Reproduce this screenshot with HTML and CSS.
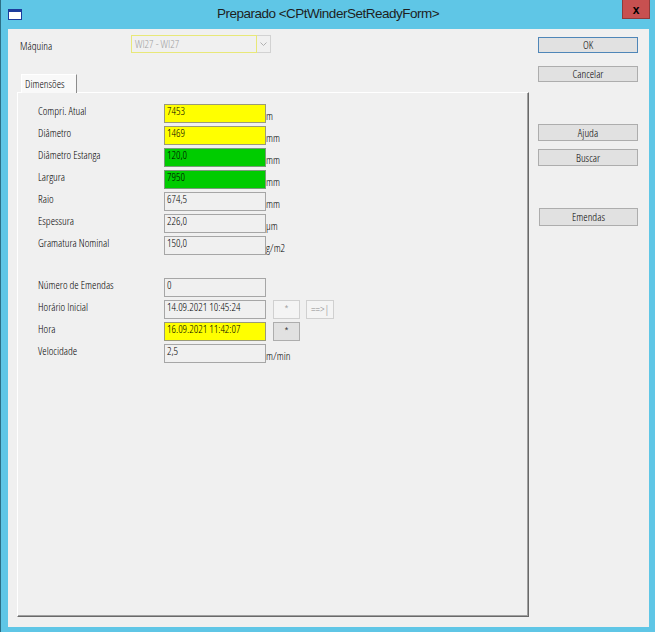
FILE: index.html
```html
<!DOCTYPE html>
<html lang="pt">
<head>
<meta charset="utf-8">
<title>Preparado</title>
<link rel="stylesheet" href="styles.css">
</head>
<body>
<div class="window">
  <div class="titlebar">
    <span class="app-icon"></span>
    <div class="title">Preparado &lt;CPtWinderSetReadyForm&gt;</div>
    <div class="close">x</div>
  </div>
  <div class="client">
    <div class="main">
      <div class="machine-row">
        <span class="machine-lbl">Máquina</span>
        <div class="combo">
          <span class="combo-text">WI27 - WI27</span>
          <span class="combo-btn">
            <svg width="7" height="5" viewBox="0 0 7 5"><polyline points="0.5,0.5 3.5,3.5 6.5,0.5" fill="none" stroke="#b0b0b0" stroke-width="1"/></svg>
          </span>
        </div>
      </div>
      <div class="tabs">
        <div class="tab">Dimensões</div>
        <div class="panel">
          <div class="group">
            <div class="row"><span class="lbl">Compri. Atual</span><span class="field yellow">7453</span><span class="unit">m</span></div>
            <div class="row"><span class="lbl">Diâmetro</span><span class="field yellow">1469</span><span class="unit">mm</span></div>
            <div class="row"><span class="lbl">Diâmetro Estanga</span><span class="field green">120,0</span><span class="unit">mm</span></div>
            <div class="row"><span class="lbl">Largura</span><span class="field green">7950</span><span class="unit">mm</span></div>
            <div class="row"><span class="lbl">Raio</span><span class="field">674,5</span><span class="unit">mm</span></div>
            <div class="row"><span class="lbl">Espessura</span><span class="field">226,0</span><span class="unit">µm</span></div>
            <div class="row"><span class="lbl">Gramatura Nominal</span><span class="field">150,0</span><span class="unit">g/m2</span></div>
          </div>
          <div class="group group2">
            <div class="row"><span class="lbl">Número de Emendas</span><span class="field">0</span></div>
            <div class="row"><span class="lbl">Horário Inicial</span><span class="field">14.09.2021 10:45:24</span><span class="mini disabled">*</span><span class="mini mini2 disabled">==&gt;|</span></div>
            <div class="row"><span class="lbl">Hora</span><span class="field yellow">16.09.2021 11:42:07</span><span class="mini">*</span></div>
            <div class="row"><span class="lbl">Velocidade</span><span class="field">2,5</span><span class="unit">m/min</span></div>
          </div>
        </div>
      </div>
    </div>
    <div class="side">
      <div class="btn default">OK</div>
      <div class="btn cancel">Cancelar</div>
      <div class="btn help">Ajuda</div>
      <div class="btn search">Buscar</div>
      <div class="btn splices">Emendas</div>
    </div>
  </div>
</div>
</body>
</html>
```

FILE: styles.css
```css
* { box-sizing: border-box; }
html, body { margin: 0; padding: 0; }
body { width: 655px; height: 632px; overflow: hidden; background: #5fc6e6; }

.window {
  width: 655px;
  height: 632px;
  background: #5fc6e6;
  border-left: 1px solid #2c6f86;
  display: flex;
  flex-direction: column;
}

.titlebar {
  height: 29px;
  display: grid;
  grid-template-columns: 1fr auto 1fr;
}
.app-icon {
  justify-self: start;
  align-self: start;
  margin: 9px 0 0 7px;
  width: 14px;
  height: 11px;
  border: 1px solid #1c3c9c;
  border-top-width: 3px;
  background: #fff;
}
.title {
  font-family: "Liberation Sans", Arial, sans-serif;
  font-size: 13.5px;
  letter-spacing: -0.5px;
  line-height: 15px;
  padding-top: 6px;
  color: #1e1e1e;
  white-space: nowrap;
}
.close {
  justify-self: end;
  align-self: start;
  width: 28px;
  height: 19px;
  margin-right: 5px;
  background: #c75050;
  border: 1px solid #8f3b3b;
  border-top: none;
  color: #000;
  font: bold 12px "Liberation Sans", Arial, sans-serif;
  line-height: 14px;
  display: flex;
  align-items: center;
  justify-content: center;
  padding-top: 1px;
}

.client {
  flex: 1;
  margin: 0 6px 5px 7px;
  background: #f0f0f0;
  display: flex;
  font-family: "Open Sans", "Liberation Sans", sans-serif;
  font-stretch: 75%;
  font-weight: 360;
  font-size: 11px;
  color: #000;
}

.main {
  width: 521px;
  display: flex;
  flex-direction: column;
}
.machine-row {
  display: flex;
  align-items: flex-start;
  padding: 6px 0 0 12px;
  height: 24px;
}
.machine-lbl {
  width: 111px;
  padding-top: 4px;
  line-height: 13px;
}
.combo {
  display: flex;
  height: 18px;
}
.combo-text {
  width: 126px;
  border: 1px solid #e8e878;
  color: #a0a0a0;
  padding: 1px 0 0 3px;
  line-height: 13px;
}
.combo-btn {
  width: 14px;
  border: 1px solid #d2d2d2;
  border-left: none;
  display: flex;
  align-items: center;
  justify-content: center;
}

.tabs {
  flex: 1;
  display: flex;
  flex-direction: column;
  margin: 21px 0 10px 9px;
}
.tab {
  align-self: flex-start;
  margin-left: 4px;
  width: 56px;
  height: 19px;
  border: 1px solid;
  border-color: #ffffff #8c8c8c transparent #ffffff;
  border-bottom: none;
  background: #f9f9f9;
  padding: 2px 0 0 3px;
  line-height: 13px;
  white-space: nowrap;
  position: relative;
  z-index: 1;
  margin-bottom: -1px;
}
.panel {
  flex: 1;
  border: 1px solid;
  border-color: #ffffff #696969 #696969 #ffffff;
  box-shadow: inset -1px -1px 0 #a0a0a0;
  padding: 11px 0 0 20px;
}

.row {
  display: flex;
  align-items: flex-start;
  height: 19px;
  margin-bottom: 3px;
}
.lbl {
  width: 126px;
  padding-top: 0;
  line-height: 13px;
  white-space: nowrap;
}
.field {
  width: 102px;
  height: 19px;
  border: 1px solid #a6a6a6;
  padding-left: 2px;
  line-height: 12px;
  white-space: nowrap;
}
.field.yellow { background: #ffff00; border-color: #9a9a7a; }
.field.green { background: #00cc00; border-color: #7a9a7a; }
.unit {
  padding-top: 5px;
  line-height: 13px;
}
.group2 { margin-top: 23px; }

.mini {
  width: 27px;
  height: 19px;
  margin-left: 7px;
  border: 1px solid #adadad;
  background: #e1e1e1;
  text-align: center;
  line-height: 15px;
}
.mini.disabled {
  background: #f4f4f4;
  border-color: #d0d0d0;
  color: #8a8a8a;
}
.mini2 {
  width: 28px;
  margin-left: 6px;
  color: #a8a8a8;
}

.side {
  margin-left: 9px;
  width: 100px;
  display: flex;
  flex-direction: column;
  padding-top: 8px;
}
.btn {
  height: 16px;
  border: 1px solid #adadad;
  background: #e1e1e1;
  text-align: center;
  line-height: 14px;
}
.btn.default { border-color: #4f86b8; }
.btn.cancel { margin-top: 13px; }
.btn.help { margin-top: 42px; height: 17px; line-height: 15px; }
.btn.search { margin-top: 8px; height: 17px; line-height: 15px; }
.btn.splices { margin-top: 42px; margin-left: 1px; height: 18px; line-height: 16px; }
```
